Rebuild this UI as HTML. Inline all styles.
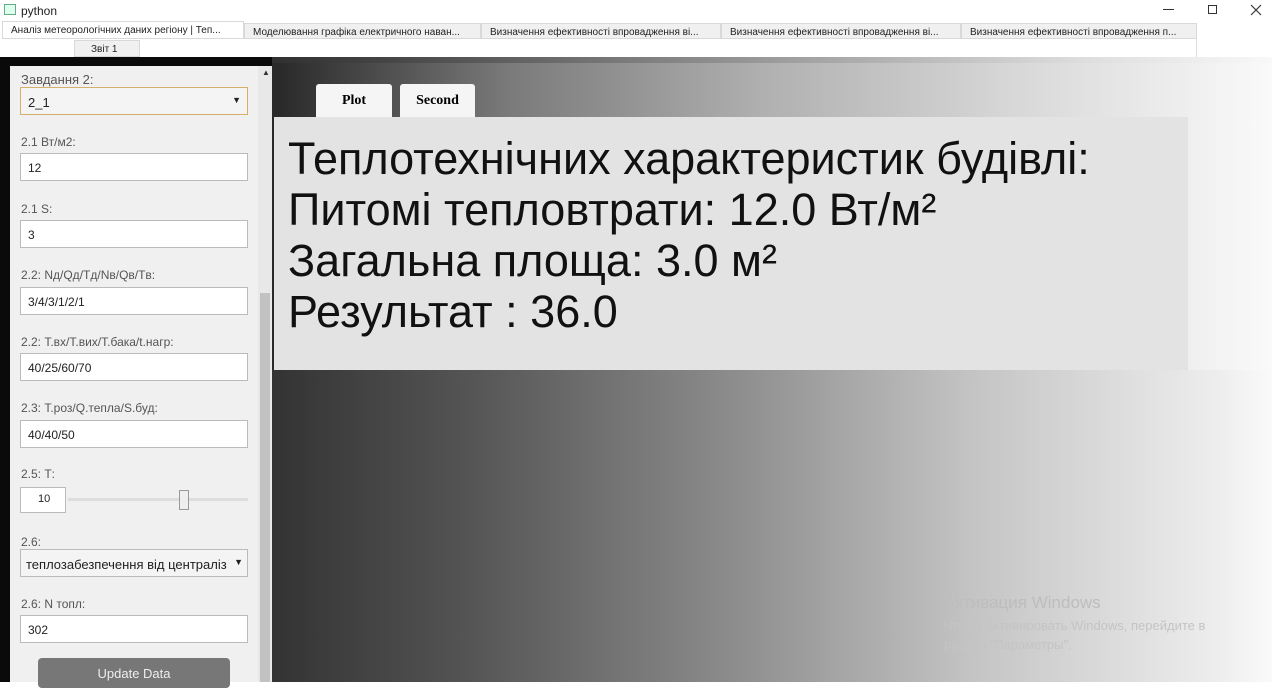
<!DOCTYPE html>
<html><head><meta charset="utf-8"><style>
*{box-sizing:border-box;margin:0;padding:0}
body{width:1280px;height:682px;overflow:hidden;background:#fff;font-family:"Liberation Sans",sans-serif;position:relative}
.a{position:absolute}
.tab{position:absolute;top:23px;height:16px;font-size:10px;color:#222;background:#f0f0f0;border:1px solid #d9d9d9;padding:3px 0 0 8px;white-space:nowrap;overflow:hidden}
.lbl{position:absolute;left:21px;font-size:12px;color:#555}
.in{position:absolute;left:20px;width:228px;height:28px;background:#fff;border:1px solid #bbb;font-size:12px;color:#222;padding:7px 0 0 7px}
.big{font-size:45px;color:#111;line-height:51px;white-space:nowrap}
</style></head><body>
<div class="a" style="left:4px;top:4px;width:12px;height:11px;border:1px solid #6a8;background:#dfe"></div>
<div class="a" style="left:21px;top:4px;font-size:12px;color:#222">python</div>
<div class="a" style="left:1163px;top:9px;width:11px;height:1px;background:#333"></div>
<div class="a" style="left:1208px;top:5px;width:9px;height:9px;border:1px solid #333"></div>
<svg class="a" style="left:1250px;top:4px" width="12" height="12"><path d="M1 1L11 11M11 1L1 11" stroke="#333" stroke-width="1.2"/></svg>
<div class="tab" style="left:2px;width:242px;top:21px;height:18px;background:#fff">Аналіз метеорологічних даних регіону | Теп...</div>
<div class="tab" style="left:244px;width:237px">Моделювання графіка електричного наван...</div>
<div class="tab" style="left:481px;width:240px">Визначення ефективності впровадження ві...</div>
<div class="tab" style="left:721px;width:240px">Визначення ефективності впровадження ві...</div>
<div class="tab" style="left:961px;width:236px">Визначення ефективності впровадження п...</div>
<div class="a" style="left:1196px;top:39px;width:1px;height:18px;background:#ddd"></div>
<div class="tab" style="left:74px;top:40px;width:66px;height:17px;padding-left:16px">Звіт 1</div>
<div class="a" style="left:0;top:57px;width:1272px;height:625px;background:linear-gradient(90deg,#111 0%,#2a2a2a 22%,#7a7a7a 40%,#b0b0b0 60%,#d8d8d8 80%,#fafafa 100%)"></div>
<div class="a" style="left:0;top:57px;width:1272px;height:6px;background:linear-gradient(90deg,#000,#444 30%,#999 60%,#ddd 85%,#f8f8f8)"></div>
<div class="a" style="left:0;top:57px;width:272px;height:625px;background:#0a0a0a"></div>
<div class="a" style="left:272px;top:370px;width:1000px;height:312px;background:linear-gradient(90deg,#333 0%,#555 20%,#8a8a8a 45%,#c4c4c4 70%,#eee 95%,#fafafa)"></div>
<div class="a" style="left:10px;top:66px;width:262px;height:616px;background:#f0f0f0"></div>
<div class="a" style="left:258px;top:66px;width:14px;height:616px;background:#e8e8e8"></div>
<div class="a" style="left:260px;top:293px;width:10px;height:389px;background:#c2c2c2"></div>
<div class="a" style="left:262px;top:68px;font-size:8px;color:#333">▲</div>
<div class="lbl" style="top:72px;font-size:13px">Завдання 2:</div>
<div class="in" style="top:87px;border-color:#d6b06a;background:#f4f4f4;font-size:13px">2_1<span style="position:absolute;right:6px;top:7px;font-size:9px">▼</span></div>
<div class="lbl" style="top:135px">2.1 Вт/м2:</div>
<div class="in" style="top:153px">12</div>
<div class="lbl" style="top:202px">2.1 S:</div>
<div class="in" style="top:220px">3</div>
<div class="lbl" style="top:268px">2.2: Nд/Qд/Tд/Nв/Qв/Tв:</div>
<div class="in" style="top:287px">3/4/3/1/2/1</div>
<div class="lbl" style="top:335px">2.2: Т.вх/Т.вих/Т.бака/t.нагр:</div>
<div class="in" style="top:353px">40/25/60/70</div>
<div class="lbl" style="top:401px">2.3: Т.роз/Q.тепла/S.буд:</div>
<div class="in" style="top:420px">40/40/50</div>
<div class="lbl" style="top:467px">2.5: Т:</div>
<div class="in" style="top:487px;width:46px;height:26px;padding:5px 0 0 17px;font-size:11px">10</div>
<div class="a" style="left:68px;top:498px;width:180px;height:3px;background:#ddd"></div>
<div class="a" style="left:179px;top:490px;width:10px;height:20px;background:#eee;border:1px solid #999"></div>
<div class="lbl" style="top:535px">2.6:</div>
<div class="in" style="top:549px;background:#f4f4f4;font-size:13px;padding-left:5px;overflow:hidden;white-space:nowrap">теплозабезпечення від централіз<span style="position:absolute;right:4px;top:7px;font-size:9px;background:#f4f4f4">▼</span></div>
<div class="lbl" style="top:597px">2.6: N топл:</div>
<div class="in" style="top:615px">302</div>
<div class="a" style="left:38px;top:658px;width:192px;height:30px;background:#777;border-radius:4px;color:#eee;font-size:13px;text-align:center;padding-top:8px">Update Data</div>
<div class="a" style="left:316px;top:84px;width:76px;height:34px;background:#f5f5f5;font-family:'Liberation Serif',serif;font-weight:bold;font-size:14px;text-align:center;padding-top:9px;border-radius:3px 3px 0 0">Plot</div>
<div class="a" style="left:400px;top:84px;width:75px;height:34px;background:#f5f5f5;font-family:'Liberation Serif',serif;font-weight:bold;font-size:14px;text-align:center;padding-top:9px;border-radius:3px 3px 0 0">Second</div>
<div class="a" style="left:274px;top:117px;width:914px;height:253px;background:#e3e3e3;padding:16px 0 0 14px">
<div class="big">Теплотехнічних характеристик будівлі:</div>
<div class="big">Питомі тепловтрати: 12.0 Вт/м²</div>
<div class="big">Загальна площа: 3.0 м²</div>
<div class="big">Результат : 36.0</div>
</div>
<div class="a" style="left:944px;top:593px;font-size:17px;color:#bdbdbd">Активация Windows</div>
<div class="a" style="left:944px;top:616px;font-size:13px;color:#c4c4c4;line-height:19px">Чтобы активировать Windows, перейдите в<br>раздел "Параметры".</div>
</body></html>
